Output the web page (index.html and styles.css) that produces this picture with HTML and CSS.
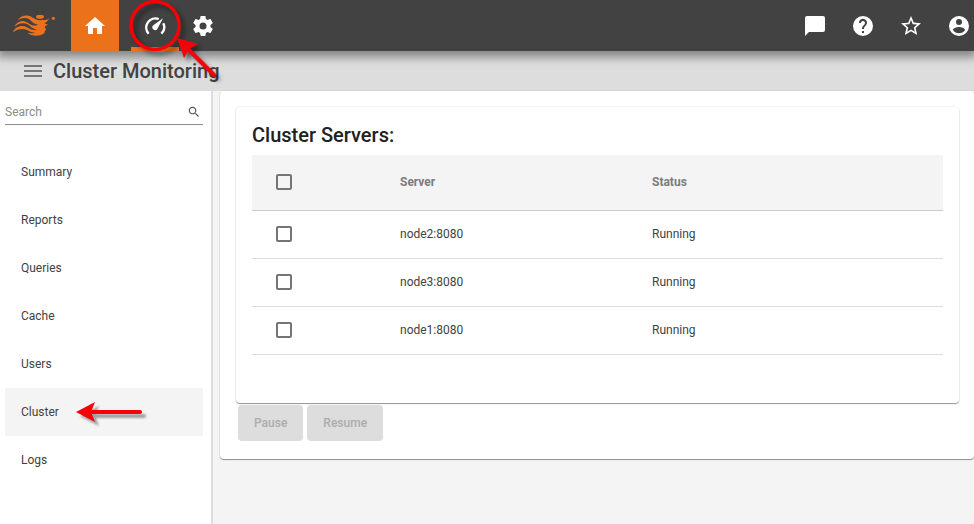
FILE: index.html
```html
<!DOCTYPE html>
<html lang="en">
<head>
<meta charset="utf-8">
<title>Cluster Monitoring</title>
<link rel="stylesheet" href="styles.css">
</head>
<body>
<header class="topbar">
  <a class="logo" href="#" aria-label="Product home">
    <svg width="44" height="24" viewBox="36 39 132 72" fill="#ec711b" aria-hidden="true">
      <ellipse cx="120" cy="50" rx="12" ry="6"/>
      <circle cx="160" cy="55" r="5"/>
      <path d="M52 62C61 47 78 42 94 50C106 58 115 63 126 60C136 60 140 61 148 55C144 64 139 68 132 70C138 71 142 73 144 75C138 76 134 78 135 83C137 87 142 87 136 91C132 95 137 98 129 102C120 107 108 109 94 105C88 103 86 101 84 98C94 100 102 101 107 97C98 99 91 96 83 91C69 84 55 85 38 97C46 79 66 73 81 82C91 88 99 94 112 87C99 88 93 80 85 74C71 67 58 69 43 80C51 64 67 58 83 68C94 75 102 80 115 74C103 74 96 65 88 58C76 51 63 53 52 62Z"/>
    </svg>
  </a>
  <nav class="tools" aria-label="Main">
    <a class="tool tool-home" href="#" aria-label="Home"><svg class="icon" viewBox="0 0 24 24"><path d="M10 20v-6h4v6h5v-8h3L12 3 2 12h3v8z"/></svg></a>
    <a class="tool tool-current" href="#" aria-label="Monitoring">
      <svg class="icon" viewBox="0 0 24 24"><path d="M5.600 19.700A9.200 9.200 0 0 1 15.800 5M20.300 9.200A9.200 9.200 0 0 1 18.400 19.700" class="gauge-arc"/><path d="M20 4.300l-5.700 10.700a2.700 2.700 0 0 1-4.300-3.400z"/></svg>
      <svg class="callout" width="104" height="96" viewBox="126 -2 104 96" aria-hidden="true">
        <circle cx="155" cy="25.500" r="24" fill="none" stroke="#f80008" stroke-width="3.500"/>
        <path d="M214 75L187 48" fill="none" stroke="#f80008" stroke-width="4" stroke-linecap="round"/>
        <path d="M177 38L198 44L189 49L184 58Z" fill="#f80008"/>
      </svg>
    </a>
    <a class="tool" href="#" aria-label="Settings"><svg class="icon" viewBox="0 0 24 24"><path d="M19.430 12.980c.04-.32.07-.64.07-.98s-.03-.66-.07-.98l2.110-1.650c.19-.15.24-.42.12-.64l-2-3.460c-.12-.22-.39-.3-.61-.22l-2.490 1c-.52-.4-1.080-.73-1.690-.98l-.38-2.650C14.460 2.180 14.250 2 14 2h-4c-.25 0-.46.18-.49.42l-.38 2.650c-.61.25-1.170.59-1.690.98l-2.490-1c-.23-.09-.49 0-.61.22l-2 3.460c-.13.22-.07.49.12.64l2.110 1.650c-.04.32-.07.65-.07.98s.03.66.07.98l-2.110 1.650c-.19.15-.24.42-.12.64l2 3.460c.12.22.39.3.61.22l2.490-1c.52.4 1.080.73 1.690.98l.38 2.650c.03.24.24.42.49.42h4c.25 0 .46-.18.49-.42l.38-2.650c.61-.25 1.170-.59 1.690-.98l2.490 1c.23.09.49 0 .61-.22l2-3.460c.12-.22.07-.49-.12-.64zM12 15.500a3.500 3.500 0 1 1 0-7 3.500 3.500 0 0 1 0 7z"/></svg></a>
  </nav>
  <div class="actions">
    <button class="action" aria-label="Messages"><svg class="icon" viewBox="0 0 24 24"><path d="M20 2H4a2 2 0 0 0-2 2v18l4-4h14a2 2 0 0 0 2-2V4a2 2 0 0 0-2-2z"/></svg></button>
    <button class="action" aria-label="Help"><svg class="icon" viewBox="0 0 24 24"><path d="M12 2a10 10 0 1 0 0 20 10 10 0 0 0 0-20zm1 17h-2v-2h2zm2.070-7.750l-.9.920C13.450 12.900 13 13.500 13 15h-2v-.5c0-1.100.45-2.100 1.170-2.830l1.240-1.260A2 2 0 1 0 10 9H8a4 4 0 1 1 7.070 2.250z"/></svg></button>
    <button class="action" aria-label="Favorites"><svg class="icon" viewBox="0 0 24 24"><path d="M22 9.240l-7.190-.62L12 2 9.190 8.630 2 9.240l5.460 4.730L5.820 21 12 17.270 18.180 21l-1.630-7.030zM12 15.400l-3.760 2.270 1-4.280-3.320-2.880 4.380-.38L12 6.100l1.710 4.040 4.380.38-3.320 2.880 1 4.280z"/></svg></button>
    <button class="action" aria-label="Account"><svg class="icon" viewBox="0 0 24 24"><path d="M12 2a10 10 0 1 0 0 20 10 10 0 0 0 0-20zm0 3a3 3 0 1 1 0 6 3 3 0 0 1 0-6zm0 14.200a7.200 7.200 0 0 1-6-3.220c.03-1.990 4-3.080 6-3.080s5.970 1.090 6 3.080a7.200 7.200 0 0 1-6 3.220z"/></svg></button>
  </div>
</header>

<div class="titlebar">
  <button class="menu" aria-label="Toggle menu"><svg width="18" height="12" viewBox="0 0 18 12" fill="#777"><path d="M0 0h18v2H0zM0 5h18v2H0zM0 10h18v2H0z"/></svg></button>
  <h1 class="page-title">Cluster Monitoring</h1>
</div>

<div class="workspace">
  <aside class="sidebar">
    <div class="search">
      <input class="search-input" type="text" placeholder="Search" aria-label="Search">
      <svg width="14" height="14" viewBox="0 0 24 24" fill="#555" aria-hidden="true"><path d="M15.500 14h-.79l-.28-.27a6.500 6.500 0 1 0-.7.700l.27.280v.790l5 4.990L20.490 19zm-6 0a4.500 4.500 0 1 1 0-9 4.500 4.500 0 0 1 0 9z"/></svg>
    </div>
    <nav class="side-nav" aria-label="Monitoring sections">
      <a class="side-link" href="#">Summary</a>
      <a class="side-link" href="#">Reports</a>
      <a class="side-link" href="#">Queries</a>
      <a class="side-link" href="#">Cache</a>
      <a class="side-link" href="#">Users</a>
      <a class="side-link side-link-current" href="#" aria-current="page">Cluster
        <svg class="callout-row" width="80" height="32" viewBox="0 0 80 32" aria-hidden="true">
          <path d="M18 16H66" stroke="#f80008" stroke-width="4" stroke-linecap="round"/>
          <path d="M2 16L21 6L17 16L21 26Z" fill="#f80008"/>
        </svg>
      </a>
      <a class="side-link" href="#">Logs</a>
    </nav>
  </aside>

  <main class="content">
    <div class="card panel">
      <section class="card servers">
        <h2 class="servers-title">Cluster Servers:</h2>
        <table class="table">
          <thead>
            <tr><th class="col-check"><input class="check" type="checkbox" aria-label="Select all servers"></th><th class="col-server">Server</th><th>Status</th></tr>
          </thead>
          <tbody>
            <tr><td><input class="check" type="checkbox" aria-label="Select node2"></td><td>node2:8080</td><td>Running</td></tr>
            <tr><td><input class="check" type="checkbox" aria-label="Select node3"></td><td>node3:8080</td><td>Running</td></tr>
            <tr><td><input class="check" type="checkbox" aria-label="Select node1"></td><td>node1:8080</td><td>Running</td></tr>
          </tbody>
        </table>
      </section>
      <div class="buttons">
        <button class="button" disabled>Pause</button>
        <button class="button" disabled>Resume</button>
      </div>
    </div>
  </main>
</div>
</body>
</html>
```
FILE: styles.css
```css
* {
  box-sizing: border-box;
}

body {
  margin: 0;
  min-height: 100vh;
  display: flex;
  flex-direction: column;
  background: #f4f4f4;
  color: #424242;
  font: 12px/16px Roboto, sans-serif;
}

button {
  padding: 0;
  border: 0;
  background: none;
  font: inherit;
}

.icon {
  width: 24px;
  height: 24px;
  fill: #fff;
}

/* Top bar */
.topbar {
  position: relative;
  z-index: 2;
  display: flex;
  align-items: center;
  height: 51px;
  background: #424242;
  box-shadow: 0 3px 9px 3px rgba(0, 0, 0, 0.4);
}

.logo {
  width: 71px;
  padding: 0 0 2px 12px;
}

.logo svg {
  display: block;
}

.tools {
  display: flex;
  flex: 1;
  height: 100%;
}

.tool {
  position: relative;
  display: flex;
  align-items: center;
  justify-content: center;
  width: 48px;
}

.tool-home {
  margin-right: 12px;
  background: #ec711b;
}

.tool-current {
  z-index: 1;
  border-top: 4px solid transparent;
  border-bottom: 4px solid #ec711b;
}

.gauge-arc {
  fill: none;
  stroke: #fff;
  stroke-width: 2.4;
}

.callout {
  position: absolute;
  top: -6px;
  left: -5px;
  filter: drop-shadow(4px 4px 2px rgba(0, 0, 0, 0.4));
}

.actions {
  display: flex;
  gap: 24px;
  padding-right: 3px;
}

.action {
  display: flex;
}

/* Title bar */
.titlebar {
  display: flex;
  align-items: center;
  gap: 11px;
  height: 40px;
  padding-left: 24px;
  background: #ddd;
}

.menu {
  display: flex;
}

.page-title,
.servers-title {
  margin: 0;
  font-size: 20px;
  line-height: 24px;
  font-weight: 500;
}

.page-title {
  color: #424242;
}

/* Sidebar */
.workspace {
  display: flex;
  flex: 1;
}

.sidebar {
  flex: none;
  width: 213px;
  padding: 8px 8px 0 5px;
  border-right: 2px solid #ddd;
  background: #fff;
}

.search {
  display: flex;
  align-items: center;
  height: 26px;
  margin-bottom: 23px;
  padding-right: 2px;
  border-bottom: 1px solid #8c8c8c;
}

.search-input {
  flex: 1;
  min-width: 0;
  padding: 0;
  border: 0;
  outline: 0;
  background: none;
  color: #424242;
  font: inherit;
}

.search-input::placeholder {
  color: #8c8c8c;
}

.side-link {
  position: relative;
  display: flex;
  align-items: center;
  height: 48px;
  padding: 0 16px;
  color: #424242;
  text-decoration: none;
}

.side-link-current {
  background: #f4f4f4;
}

.callout-row {
  position: absolute;
  left: 69px;
  filter: drop-shadow(4px 4px 1px rgba(0, 0, 0, 0.35));
}

/* Content */
.content {
  flex: 1;
  padding-left: 7px;
}

.card {
  border-radius: 4px;
  background: #fff;
  box-shadow: 0 1px 1px rgba(0, 0, 0, 0.4), 0 0 0 1px rgba(0, 0, 0, 0.04);
}

.panel {
  padding: 16px 15px 18px 16px;
}

.servers {
  padding: 16px 16px 48px;
}

.servers-title {
  margin-bottom: 8px;
  color: #212121;
}

.table {
  width: 100%;
  border-collapse: collapse;
  table-layout: fixed;
}

.table th,
.table td {
  height: 48px;
  padding: 0;
  border-bottom: 1px solid #ddd;
  text-align: left;
}

.table th {
  height: 55px;
  border-bottom-color: #ccc;
  background: #f4f4f4;
  color: #7c7c7c;
  font-weight: 700;
}

.table .col-check {
  width: 148px;
}

.table .col-server {
  width: 252px;
}

.check {
  display: block;
  width: 16px;
  height: 16px;
  margin: 0 0 0 24px;
  border: 2px solid #757575;
  border-radius: 2px;
  appearance: none;
}

.check:checked {
  background: #757575;
}

.buttons {
  display: flex;
  gap: 4px;
  padding: 2px 2px 0;
}

.button {
  height: 36px;
  padding: 0 16px;
  border-radius: 4px;
  background: #ddd;
  color: #acacac;
  font-weight: 500;
}
```
